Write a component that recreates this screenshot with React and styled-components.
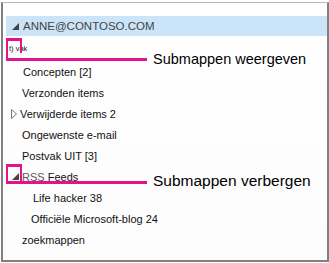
import React from "react";
import styled, { createGlobalStyle } from "styled-components";

const Global = createGlobalStyle`
  html, body { margin: 0; padding: 0; background: #ffffff; }
  body { font-family: "Liberation Sans", Arial, sans-serif; }
`;

const Page = styled.div`
  width: 329px;
  height: 263px;
  overflow: hidden;
  background: #ffffff;
`;

const Frame = styled.div`
  position: relative;
  box-sizing: border-box;
  width: 328px;
  height: 260px;
  margin: 2px 0 0 1px;
  border-top: 1px solid #b9b9b9;
  border-left: 2px solid #808080;
  border-right: 2px solid #808080;
  border-bottom: 2px solid #808080;
  padding-top: 13px;
  background: linear-gradient(#ffffff, #fcfcfc);
  display: flex;
  flex-direction: column;
`;

const Header = styled.div`
  height: 20px;
  margin-left: 3px;
  background: #cce4f7;
  display: flex;
  align-items: center;
  padding-left: 6px;
  gap: 4px;
`;

const HeaderText = styled.span`
  font-size: 11.5px;
  color: #444444;
`;

const VakRow = styled.div`
  height: 25px;
  display: flex;
  align-items: center;
  padding-left: 6px;
  font-size: 7.5px;
  color: #111;
`;

const Row = styled.div`
  height: 21px;
  display: flex;
  align-items: center;
  padding-left: ${(p) => p.$indent}px;
  gap: 3px;
  font-size: 11px;
  color: #111111;
  white-space: nowrap;
`;

const Muted = styled.span`
  color: #5a5a5a;
`;

const Callout = styled.div`
  position: absolute;
  left: 3px;
  top: ${(p) => p.$top}px;
  display: flex;
  align-items: flex-start;
`;

const Label = styled.span`
  margin-left: 6px;
  margin-top: ${(p) => p.$offset}px;
  font-size: ${(p) => p.$size}px;
  line-height: 16px;
  color: #000;
  white-space: nowrap;
`;

const PINK = "#e5138b";

function Expanded() {
  return (
    <svg width="7" height="7" viewBox="0 0 7 7">
      <polygon points="7,0 7,7 0,7" fill="#444" />
    </svg>
  );
}

function Collapsed() {
  return (
    <svg width="6" height="10" viewBox="0 0 6 10">
      <polygon points="0.5,0.5 5.5,5 0.5,9.5" fill="none" stroke="#777" strokeWidth="1" />
    </svg>
  );
}

function Bracket({ height, rightHeight }) {
  return (
    <svg width="141" height={height} viewBox={`0 0 141 ${height}`}>
      <rect x="0" y="0" width="16" height="3" fill={PINK} />
      <rect x="0" y="0" width="2" height={height} fill={PINK} />
      <rect x="14" y="0" width="2" height={rightHeight} fill={PINK} />
      <rect x="0" y={height - 3} width="141" height="3" fill={PINK} />
    </svg>
  );
}

export default function App() {
  return (
    <Page>
      <Global />
      <Frame>
        <Header>
          <Expanded />
          <HeaderText>ANNE@CONTOSO.COM</HeaderText>
        </Header>
        <VakRow>t) vak</VakRow>
        <Row $indent={20}>Concepten [2]</Row>
        <Row $indent={19}>Verzonden items</Row>
        <Row $indent={8}>
          <Collapsed />
          <span>Verwijderde items 2</span>
        </Row>
        <Row $indent={19}>Ongewenste e-mail</Row>
        <Row $indent={19}>Postvak UIT [3]</Row>
        <Row $indent={9}>
          <Expanded />
          <span>
            <Muted>RSS</Muted> Feeds
          </span>
        </Row>
        <Row $indent={30}>Life hacker 38</Row>
        <Row $indent={28}>Officiële Microsoft-blog 24</Row>
        <Row $indent={19}>zoekmappen</Row>

        <Callout $top={35}>
          <Bracket height={23} rightHeight={15} />
          <Label $offset={13} $size={14.5}>Submappen weergeven</Label>
        </Callout>
        <Callout $top={161}>
          <Bracket height={20} rightHeight={20} />
          <Label $offset={9} $size={15.5}>Submappen verbergen</Label>
        </Callout>
      </Frame>
    </Page>
  );
}
